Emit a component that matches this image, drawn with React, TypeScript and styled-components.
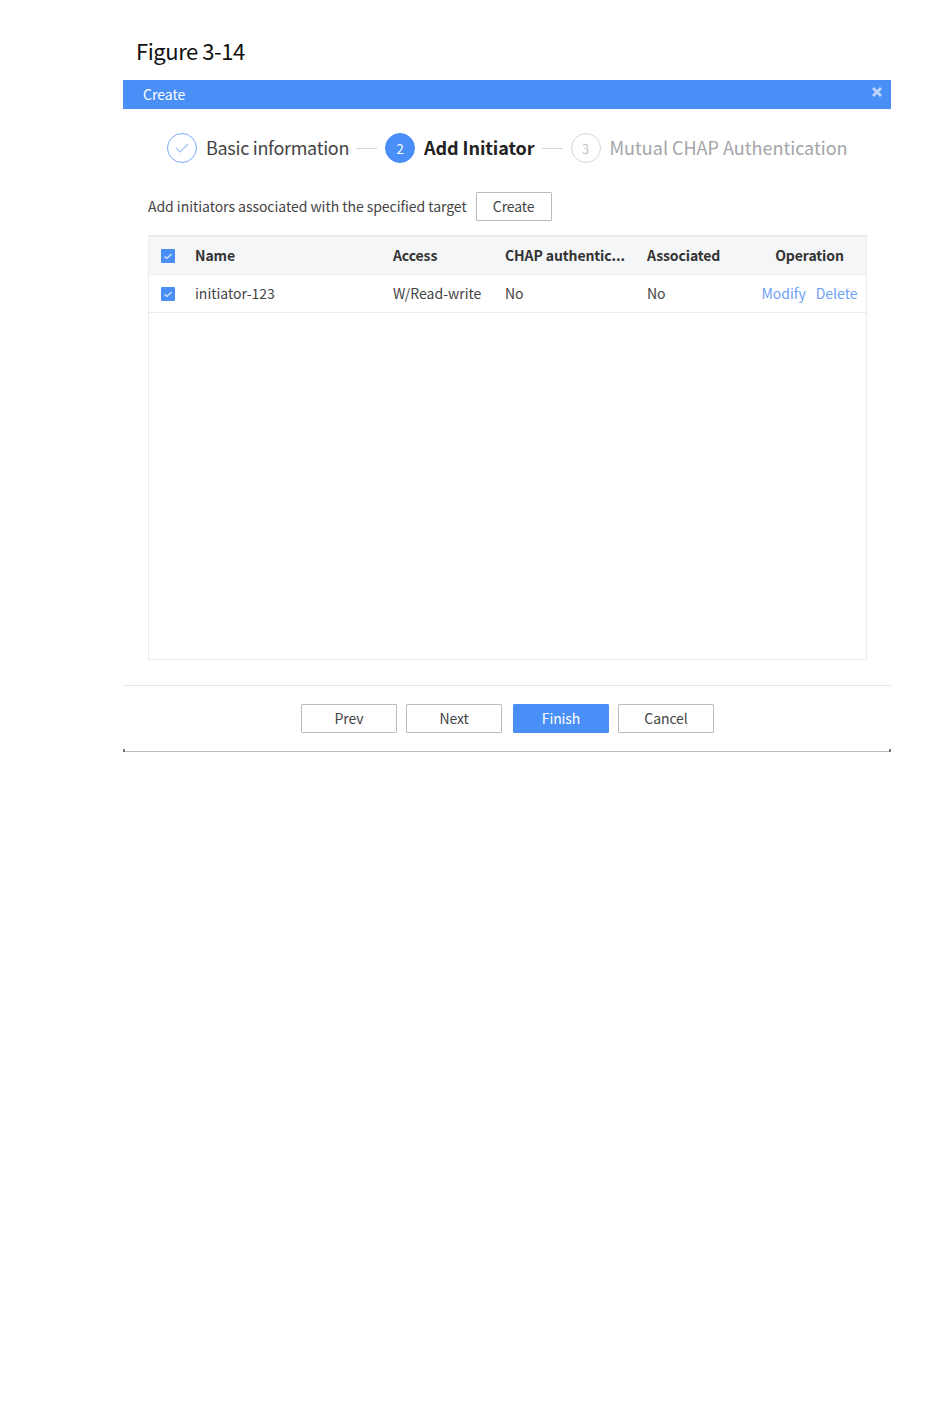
import React from "react";
import styled, { createGlobalStyle } from "styled-components";

const Global = createGlobalStyle`
  html, body { margin: 0; padding: 0; background: #fff; }
  body { font-family: "Noto Sans CJK SC", "Noto Sans", sans-serif; color: #333; }
`;

const Page = styled.div`
  width: 950px;
  height: 1422px;
  padding: 35px 59px 0 123px;
  box-sizing: border-box;
`;

const Caption = styled.div`
  height: 45px;
  padding-left: 13px;
  font-size: 22px;
  line-height: 30px;
  color: #111;
  letter-spacing: -0.45px;
`;

const Dialog = styled.div`
  position: relative;
  width: 768px;
  height: 672px;
  box-sizing: border-box;
  border-bottom: 1px solid #b9bdbf;
  display: flex;
  flex-direction: column;
  &::before, &::after {
    content: "";
    position: absolute;
    bottom: -1px;
    width: 2px;
    height: 3px;
    background: #77797b;
  }
  &::before { left: 0; }
  &::after { right: 0; }
`;

const Header = styled.div`
  height: 29px;
  flex: none;
  background: #4a8ff8;
  color: #fff;
  font-size: 14px;
  display: flex;
  align-items: center;
  justify-content: space-between;
  padding: 0 9px 0 20px;
`;

const HeaderTitle = styled.span`
  padding-bottom: 2px;
`;

const Close = styled.svg`
  width: 10px;
  height: 10px;
  margin-top: -5px;
`;

const Stepper = styled.div`
  height: 78px;
  flex: none;
  display: flex;
  align-items: center;
  padding: 0 0 0 44px;
`;

const StepCircle = styled.div<{ $state: "done" | "active" | "todo" }>`
  width: 30px;
  height: 30px;
  flex: none;
  box-sizing: border-box;
  border-radius: 50%;
  display: flex;
  align-items: center;
  justify-content: center;
  font-size: 13px;
  border: 1.5px solid ${(p) => (p.$state === "todo" ? "#d5d7d9" : p.$state === "done" ? "#7aaaf8" : "#4a8ff8")};
  background: ${(p) => (p.$state === "active" ? "#4a8ff8" : "#fff")};
  color: ${(p) => (p.$state === "active" ? "#fff" : "#c4c6c8")};
`;

const StepLabel = styled.span<{ $state: "done" | "active" | "todo" }>`
  margin-left: 9px;
  padding-bottom: 2px;
  font-size: 18px;
  line-height: 26px;
  white-space: nowrap;
  font-weight: ${(p) => (p.$state === "active" ? 700 : 400)};
  letter-spacing: ${(p) => (p.$state === "done" ? "-0.3px" : p.$state === "active" ? "-0.08px" : "0")};
  color: ${(p) => (p.$state === "active" ? "#222" : p.$state === "todo" ? "#a3a5a8" : "#444")};
`;

const StepLine = styled.div`
  width: 21px;
  height: 1px;
  flex: none;
  margin: 0 8px 0 7px;
  background: #d5d7d9;
`;

const Body = styled.div`
  flex: 1;
  padding: 5px 24px 0 25px;
  display: flex;
  flex-direction: column;
`;

const IntroRow = styled.div`
  display: flex;
  align-items: center;
  gap: 9px;
  height: 29px;
  font-size: 14px;
  color: #444;
  white-space: nowrap;
`;

const IntroText = styled.span`
  padding-bottom: 2px;
  letter-spacing: -0.04px;
`;

const Button = styled.button<{ $primary?: boolean; $width?: number }>`
  width: ${(p) => p.$width ?? 96}px;
  height: 29px;
  padding: 0 0 2px;
  box-sizing: border-box;
  font-family: inherit;
  font-size: 14px;
  letter-spacing: -0.1px;
  border-radius: 1px;
  border: 1px solid ${(p) => (p.$primary ? "#4a8ff8" : "#b8bcbe")};
  background: ${(p) => (p.$primary ? "#4a8ff8" : "#fff")};
  color: ${(p) => (p.$primary ? "#fff" : "#444")};
  margin-left: ${(p) => (p.$primary ? 2 : 0)}px;
`;

const Table = styled.div`
  margin-top: 14px;
  width: 719px;
  height: 425px;
  box-sizing: border-box;
  border: 1px solid #ececec;
  border-top-width: 2px;
`;

const Row = styled.div<{ $head?: boolean }>`
  display: grid;
  grid-template-columns: 46px 198px 112px 142px 106px 113px;
  align-items: center;
  height: 37px;
  border-bottom: 1px solid #ececec;
  box-sizing: content-box;
  background: ${(p) => (p.$head ? "#f5f6f8" : "#fff")};
  font-size: 14px;
  font-weight: ${(p) => (p.$head ? 700 : 400)};
  letter-spacing: ${(p) => (p.$head ? "-0.1px" : "0")};
  color: ${(p) => (p.$head ? "#333" : "#444")};
  white-space: nowrap;
`;

const CheckCell = styled.div`
  display: flex;
  padding-left: 12px;
`;

const Check = styled.svg`
  width: 14px;
  height: 14px;
  display: block;
`;

const Cell = styled.div<{ $center?: boolean }>`
  padding-bottom: 2px;
  text-align: ${(p) => (p.$center ? "center" : "left")};
`;

const LinkText = styled.span`
  color: #6d9ff5;
  & + & { margin-left: 10px; }
`;

const Footer = styled.div`
  height: 66px;
  flex: none;
  box-sizing: border-box;
  border-top: 1px solid #e4e6e8;
  display: flex;
  align-items: flex-start;
  padding: 18px 0 0 178px;
  gap: 9px;
`;

const CheckIcon = () => (
  <Check viewBox="0 0 14 14">
    <rect width="14" height="14" rx="1" fill="#4a8ff8" />
    <path d="M3.5 7.4 6 9.3 10.6 5" fill="none" stroke="#c9dcfc" strokeWidth="1.6" />
  </Check>
);

const steps = [
  { n: "", label: "Basic information", state: "done" as const },
  { n: "2", label: "Add Initiator", state: "active" as const },
  { n: "3", label: "Mutual CHAP Authentication", state: "todo" as const },
];

export default function App() {
  return (
    <Page>
      <Global />
      <Caption>Figure 3-14</Caption>
      <Dialog>
        <Header>
          <HeaderTitle>Create</HeaderTitle>
          <Close viewBox="0 0 10 10">
            <path d="M1 1 9 9M9 1 1 9" stroke="#c0d6fb" strokeWidth="2.8" />
          </Close>
        </Header>
        <Stepper>
          {steps.map((s, i) => (
            <React.Fragment key={s.label}>
              {i > 0 && <StepLine />}
              <StepCircle $state={s.state}>
                {s.state === "done" ? (
                  <svg width="14" height="10" viewBox="0 0 14 10">
                    <path d="M1 5 5 9 13 1" fill="none" stroke="#9cc0f8" strokeWidth="1.1" />
                  </svg>
                ) : (
                  s.n
                )}
              </StepCircle>
              <StepLabel $state={s.state}>{s.label}</StepLabel>
            </React.Fragment>
          ))}
        </Stepper>
        <Body>
          <IntroRow>
            <IntroText>Add initiators associated with the specified target</IntroText>
            <Button $width={76}>Create</Button>
          </IntroRow>
          <Table>
            <Row $head>
              <CheckCell><CheckIcon /></CheckCell>
              <Cell>Name</Cell>
              <Cell>Access</Cell>
              <Cell>CHAP authentic...</Cell>
              <Cell>Associated</Cell>
              <Cell $center>Operation</Cell>
            </Row>
            <Row>
              <CheckCell><CheckIcon /></CheckCell>
              <Cell>initiator-123</Cell>
              <Cell>W/Read-write</Cell>
              <Cell>No</Cell>
              <Cell>No</Cell>
              <Cell $center>
                <LinkText>Modify</LinkText>
                <LinkText>Delete</LinkText>
              </Cell>
            </Row>
          </Table>
        </Body>
        <Footer>
          <Button>Prev</Button>
          <Button>Next</Button>
          <Button $primary>Finish</Button>
          <Button>Cancel</Button>
        </Footer>
      </Dialog>
    </Page>
  );
}
